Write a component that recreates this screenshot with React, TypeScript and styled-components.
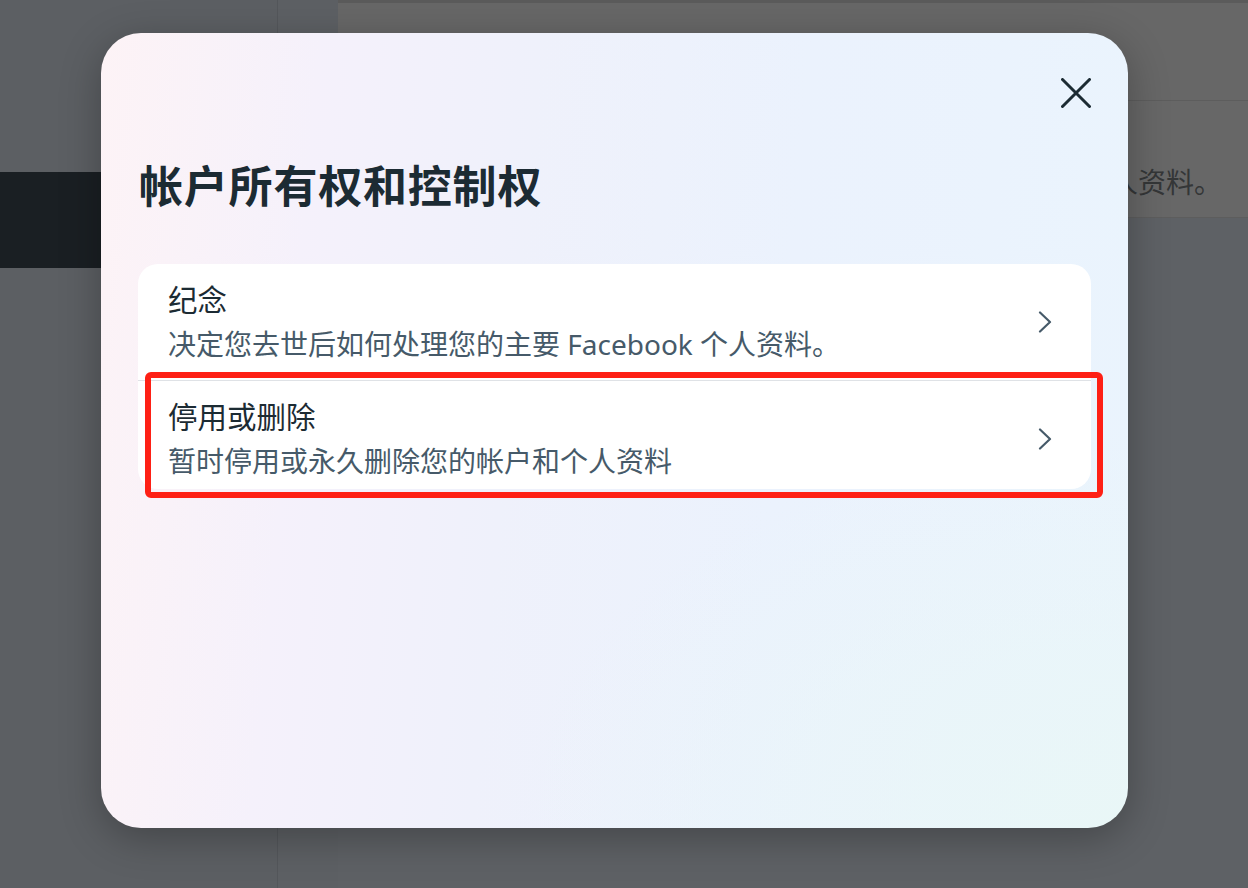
import styled, { createGlobalStyle } from 'styled-components';

const GlobalStyle = createGlobalStyle`
  html, body {
    margin: 0;
    padding: 0;
    width: 1248px;
    height: 888px;
    overflow: hidden;
    font-family: 'Noto Sans', 'Noto Sans CJK SC', sans-serif;
  }
  * {
    box-sizing: border-box;
  }
`;

const Page = styled.div`
  position: relative;
  display: flex;
  width: 1248px;
  height: 888px;
  overflow: hidden;
  background: #5e6165;
`;

const Sidebar = styled.div`
  width: 278px;
  padding-top: 172px;
  background: #5c5f63;
  border-right: 1px solid #54575b;
`;

const SidebarActive = styled.div`
  height: 96px;
  background: #1a1f23;
`;

const Gutter = styled.div`
  width: 60px;
  background: #5d6064;
`;

const Content = styled.div`
  flex: 1;
  display: flex;
  flex-direction: column;
`;

const ContentBlock = styled.div<{ $height: number }>`
  height: ${(p) => p.$height}px;
  background: #676767;
  border-top: ${(p) => (p.$height < 110 ? '3px solid #5b5b5b' : 'none')};
  border-bottom: 1px solid #5d5d5d;
  display: flex;
  align-items: flex-end;
  justify-content: flex-end;
  padding: 0 26px 15px 0;
`;

const BehindText = styled.span`
  font-size: 28px;
  line-height: 40px;
  color: #343637;
  white-space: nowrap;
`;

const Modal = styled.div`
  position: absolute;
  left: 101px;
  top: 33px;
  width: 1027px;
  height: 795px;
  border-radius: 40px;
  padding: 45px 37px 0;
  display: flex;
  flex-direction: column;
  background:
    radial-gradient(ellipse 60% 50% at 100% 100%, rgba(233, 247, 246, 0.9) 0%, rgba(233, 247, 246, 0) 100%),
    linear-gradient(95deg, #fdf3f6 0%, #f5f1fb 20%, #eff1fb 40%, #ebf2fd 65%, #eaf4fd 100%);
  box-shadow: 0 10px 40px rgba(0, 0, 0, 0.28);
`;

const HeaderRow = styled.div`
  display: flex;
  justify-content: flex-end;
`;

const CloseButton = styled.button`
  width: 30px;
  height: 30px;
  padding: 0;
  border: none;
  background: transparent;
  cursor: pointer;
  display: flex;
  align-items: center;
  justify-content: center;
`;

const Title = styled.h1`
  margin: 50px 0 0 1px;
  font-size: 44px;
  line-height: 56px;
  font-weight: 700;
  letter-spacing: 0.8px;
  color: #1c2b33;
`;

const Card = styled.div`
  position: relative;
  margin-top: 50px;
  background: #ffffff;
  border-radius: 20px;
  display: flex;
  flex-direction: column;
`;

const Item = styled.div<{ $last?: boolean }>`
  display: flex;
  align-items: center;
  padding: 16px 39px ${(p) => (p.$last ? '8px' : '16px')} 30px;
  border-top: ${(p) => (p.$last ? '1px solid #dfe2e6' : 'none')};
  cursor: pointer;
`;

const ItemText = styled.div`
  flex: 1;
  display: flex;
  flex-direction: column;
  gap: 4px;
`;

const ItemTitle = styled.div`
  font-size: 29.5px;
  line-height: 40px;
  color: #1c2b33;
`;

const ItemSub = styled.div`
  font-size: 28px;
  line-height: 40px;
  color: #465a69;
`;

const Highlight = styled.div`
  position: absolute;
  left: 7px;
  top: 108px;
  width: 958px;
  height: 126px;
  border: 6px solid #fe2015;
  border-radius: 6px;
  pointer-events: none;
`;

const Chevron = () => (
  <svg width="14" height="22" viewBox="0 0 14 22" fill="none">
    <polyline
      points="2,1.5 12,11 2,20.5"
      stroke="#465a69"
      strokeWidth="2.2"
      strokeLinecap="round"
      strokeLinejoin="round"
    />
  </svg>
);

const CloseIcon = () => (
  <svg width="30" height="30" viewBox="0 0 30 30" fill="none">
    <path d="M1.5 1.5 L28.5 28.5 M28.5 1.5 L1.5 28.5" stroke="#1c2b33" strokeWidth="3" strokeLinecap="round" />
  </svg>
);

const items = [
  { title: '纪念', sub: '决定您去世后如何处理您的主要 Facebook 个人资料。' },
  { title: '停用或删除', sub: '暂时停用或永久删除您的帐户和个人资料' },
];

function App(): JSX.Element {
  return (
    <>
      <GlobalStyle />
      <Page>
        <Sidebar>
          <SidebarActive />
        </Sidebar>
        <Gutter />
        <Content>
          <ContentBlock $height={101} />
          <ContentBlock $height={117}>
            <BehindText>决定您去世后如何处理您的主要 Facebook 个人资料。</BehindText>
          </ContentBlock>
        </Content>

        <Modal>
          <HeaderRow>
            <CloseButton aria-label="关闭">
              <CloseIcon />
            </CloseButton>
          </HeaderRow>
          <Title>帐户所有权和控制权</Title>
          <Card>
            {items.map((item, i) => (
              <Item key={item.title} $last={i === items.length - 1}>
                <ItemText>
                  <ItemTitle>{item.title}</ItemTitle>
                  <ItemSub>{item.sub}</ItemSub>
                </ItemText>
                <Chevron />
              </Item>
            ))}
            <Highlight />
          </Card>
        </Modal>
      </Page>
    </>
  );
}

export default App;
